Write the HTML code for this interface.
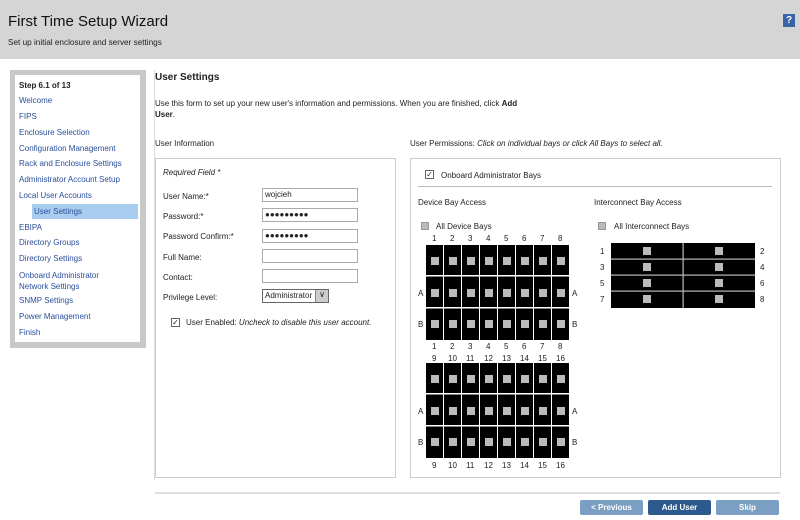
<!DOCTYPE html><html><head><style>
*{margin:0;padding:0;box-sizing:border-box}
body{width:800px;height:520px;overflow:hidden;background:#fff;font-family:"Liberation Sans",Arial,sans-serif;font-size:8px;color:#222;position:relative}
.a{position:absolute}
.hd{left:0;top:0;width:800px;height:59px;background:#d5d5d5}
.nav a{display:block;color:#2a4f9a;position:absolute;left:19px;text-decoration:none}
.inp{position:absolute;left:262px;width:96px;height:14px;border:1px solid #aaa;background:#fff;font-size:8px;padding:1px 2px}
.lbl{position:absolute;left:163px}
.cb{position:absolute;width:9px;height:9px;border:1px solid #666;background:#fff;font-size:8px;line-height:7px;text-align:center}
.gc{position:absolute;width:8px;height:8px;background:#bbb;border:1px solid #999}
.btn{position:absolute;top:500px;height:15px;width:63px;color:#fff;font-weight:bold;text-align:center;line-height:15px;font-size:8px;border-radius:2px}
</style></head><body>
<div class="a hd"></div>
<div class="a" style="left:8px;top:13px;font-size:15px;color:#111">First Time Setup Wizard</div>
<div class="a" style="left:8px;top:38px;font-size:8.2px">Set up initial enclosure and server settings</div>
<div class="a" style="left:783px;top:14px;width:12px;height:13px;background:#3a63a8;color:#fff;font-weight:bold;font-size:10px;text-align:center;line-height:13px">?</div>

<div class="a" style="left:10px;top:70px;width:136px;height:278px;background:#c8c8c8"></div>
<div class="a" style="left:15px;top:75px;width:125px;height:267px;background:#fff"></div>
<div class="a" style="left:154px;top:70px;width:1px;height:410px;background:#ddd"></div>
<div class="nav">
<div class="a" style="left:19px;top:81px;font-weight:bold">Step 6.1 of 13</div>
<a style="top:96px">Welcome</a><a style="top:112px">FIPS</a><a style="top:128px">Enclosure Selection</a>
<a style="top:144px">Configuration Management</a><a style="top:159px">Rack and Enclosure Settings</a>
<a style="top:175px">Administrator Account Setup</a><a style="top:191px">Local User Accounts</a>
<div class="a" style="left:32px;top:204px;width:106px;height:15px;background:#a9cdf0"></div>
<a style="left:34px;top:207px">User Settings</a>
<a style="top:223px">EBIPA</a><a style="top:238px">Directory Groups</a><a style="top:254px">Directory Settings</a>
<a style="top:270px;line-height:11px">Onboard Administrator<br>Network Settings</a>
<a style="top:296px">SNMP Settings</a><a style="top:312px">Power Management</a><a style="top:328px">Finish</a>
</div>

<div class="a" style="left:155px;top:72px;font-size:10px;font-weight:bold">User Settings</div>
<div class="a" style="left:155px;top:98px;width:372px;line-height:11px">Use this form to set up your new user's information and permissions. When you are finished, click <b>Add User</b>.</div>
<div class="a" style="left:155px;top:139px">User Information</div>
<div class="a" style="left:410px;top:139px">User Permissions: <i>Click on individual bays or click All Bays to select all.</i></div>

<div class="a" style="left:155px;top:158px;width:241px;height:320px;border:1px solid #ccc"></div>
<div class="lbl" style="top:168px;font-style:italic">Required Field *</div>
<div class="lbl" style="top:192px">User Name:*</div><div class="inp" style="top:188px">wojcieh</div>
<div class="lbl" style="top:212px">Password:*</div><div class="inp" style="top:208px;font-weight:bold">●●●●●●●●●</div>
<div class="lbl" style="top:232px">Password Confirm:*</div><div class="inp" style="top:229px;font-weight:bold">●●●●●●●●●</div>
<div class="lbl" style="top:253px">Full Name:</div><div class="inp" style="top:249px"></div>
<div class="lbl" style="top:273px">Contact:</div><div class="inp" style="top:269px"></div>
<div class="lbl" style="top:293px">Privilege Level:</div>
<div class="a" style="left:262px;top:289px;width:67px;height:14px;border:1px solid #666;padding:1px 2px">Administrator</div>
<div class="a" style="left:315px;top:290px;width:13px;height:12px;background:#ccc;border-left:1px solid #888;text-align:center;font-size:8px">∨</div>
<div class="cb" style="left:171px;top:318px">✓</div>
<div class="a" style="left:186px;top:318px">User Enabled: <i>Uncheck to disable this user account.</i></div>

<div class="a" style="left:410px;top:158px;width:371px;height:320px;border:1px solid #ccc"></div>
<div class="cb" style="left:425px;top:170px">✓</div>
<div class="a" style="left:441px;top:171px">Onboard Administrator Bays</div>
<div class="a" style="left:418px;top:186px;width:354px;height:1px;background:#bbb"></div>
<div class="a" style="left:418px;top:198px">Device Bay Access</div>
<div class="a" style="left:594px;top:198px">Interconnect Bay Access</div>
<div class="gc" style="left:421px;top:222px"></div><div class="a" style="left:436px;top:222px">All Device Bays</div>
<div class="gc" style="left:598px;top:222px"></div><div class="a" style="left:614px;top:222px">All Interconnect Bays</div>
<svg class="a" style="left:410px;top:230px" width="180" height="245" font-family="Liberation Sans" font-size="8" fill="#222">
<g id="g1">
<g fill="#000">
<rect x="16" y="15" width="17" height="95"/><rect x="34" y="15" width="17" height="95"/><rect x="52" y="15" width="17" height="95"/><rect x="70" y="15" width="17" height="95"/><rect x="88" y="15" width="17" height="95"/><rect x="106" y="15" width="17" height="95"/><rect x="124" y="15" width="17" height="95"/><rect x="142" y="15" width="17" height="95"/>
</g>
<rect x="16" y="45" width="143" height="1.5" fill="#fff"/><rect x="16" y="77" width="143" height="1.5" fill="#fff"/>
<g fill="#bbb"><rect x="21" y="27" width="8" height="8"/><rect x="39" y="27" width="8" height="8"/><rect x="57" y="27" width="8" height="8"/><rect x="75" y="27" width="8" height="8"/><rect x="93" y="27" width="8" height="8"/><rect x="111" y="27" width="8" height="8"/><rect x="129" y="27" width="8" height="8"/><rect x="147" y="27" width="8" height="8"/>
<rect x="21" y="59" width="8" height="8"/><rect x="39" y="59" width="8" height="8"/><rect x="57" y="59" width="8" height="8"/><rect x="75" y="59" width="8" height="8"/><rect x="93" y="59" width="8" height="8"/><rect x="111" y="59" width="8" height="8"/><rect x="129" y="59" width="8" height="8"/><rect x="147" y="59" width="8" height="8"/>
<rect x="21" y="90" width="8" height="8"/><rect x="39" y="90" width="8" height="8"/><rect x="57" y="90" width="8" height="8"/><rect x="75" y="90" width="8" height="8"/><rect x="93" y="90" width="8" height="8"/><rect x="111" y="90" width="8" height="8"/><rect x="129" y="90" width="8" height="8"/><rect x="147" y="90" width="8" height="8"/></g>
<text x="8" y="66">A</text><text x="162" y="66">A</text><text x="8" y="97">B</text><text x="162" y="97">B</text>
</g>
<g fill="#222"><text x="22" y="11">1</text><text x="40" y="11">2</text><text x="58" y="11">3</text><text x="76" y="11">4</text><text x="94" y="11">5</text><text x="112" y="11">6</text><text x="130" y="11">7</text><text x="148" y="11">8</text>
<text x="22" y="119">1</text><text x="40" y="119">2</text><text x="58" y="119">3</text><text x="76" y="119">4</text><text x="94" y="119">5</text><text x="112" y="119">6</text><text x="130" y="119">7</text><text x="148" y="119">8</text>
<text x="22" y="131">9</text><text x="38" y="131">10</text><text x="56" y="131">11</text><text x="74" y="131">12</text><text x="92" y="131">13</text><text x="110" y="131">14</text><text x="128" y="131">15</text><text x="146" y="131">16</text>
<text x="22" y="238">9</text><text x="38" y="238">10</text><text x="56" y="238">11</text><text x="74" y="238">12</text><text x="92" y="238">13</text><text x="110" y="238">14</text><text x="128" y="238">15</text><text x="146" y="238">16</text></g>
<use href="#g1" y="118"/>
</svg>
<svg class="a" style="left:595px;top:240px" width="180" height="72" font-family="Liberation Sans" font-size="8" fill="#222">
<rect x="16" y="3" width="144" height="65" fill="#000"/>
<rect x="16" y="18.5" width="144" height="1.2" fill="#bbb"/><rect x="16" y="34.5" width="144" height="1.2" fill="#bbb"/><rect x="16" y="50.5" width="144" height="1.2" fill="#bbb"/><rect x="87.5" y="3" width="1.2" height="65" fill="#bbb"/>
<g fill="#bbb"><rect x="48" y="7" width="8" height="8"/><rect x="120" y="7" width="8" height="8"/><rect x="48" y="23" width="8" height="8"/><rect x="120" y="23" width="8" height="8"/><rect x="48" y="39" width="8" height="8"/><rect x="120" y="39" width="8" height="8"/><rect x="48" y="55" width="8" height="8"/><rect x="120" y="55" width="8" height="8"/></g>
<text x="5" y="14">1</text><text x="5" y="30">3</text><text x="5" y="46">5</text><text x="5" y="62">7</text>
<text x="165" y="14">2</text><text x="165" y="30">4</text><text x="165" y="46">6</text><text x="165" y="62">8</text>
</svg>
<div class="a" style="left:155px;top:492px;width:625px;height:2px;background:#ddd"></div>
<div class="btn" style="left:580px;background:#7a9fc2">&lt; Previous</div>
<div class="btn" style="left:648px;background:#2d5a8c">Add User</div>
<div class="btn" style="left:716px;background:#7a9fc2">Skip</div>
</body></html>
